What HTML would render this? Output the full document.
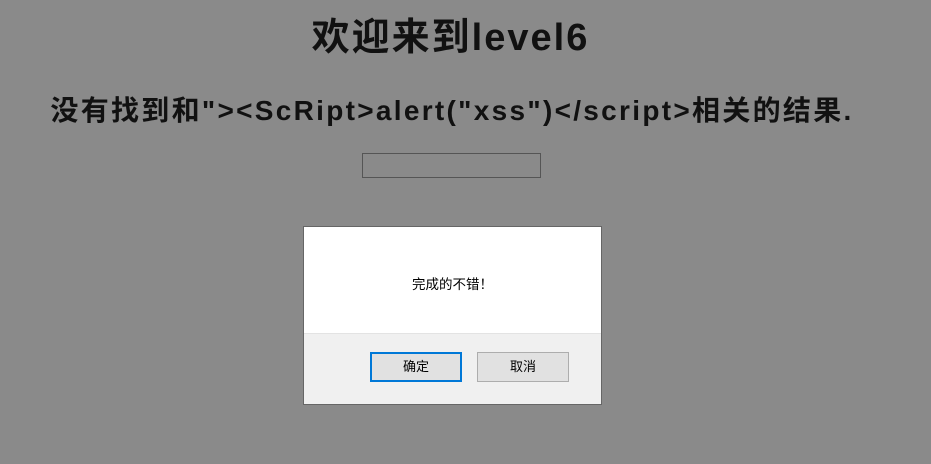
<!DOCTYPE html>
<html><head><meta charset="utf-8"><style>
html,body{margin:0;padding:0;}
body{width:931px;height:464px;background:#8a8a8a;position:relative;overflow:hidden;font-family:"Liberation Sans","Noto Sans CJK SC",sans-serif;color:#111;}
.t1{position:absolute;left:-15px;width:931px;top:13px;text-align:center;font-size:38px;font-weight:bold;line-height:50px;letter-spacing:2px;}
.t2{position:absolute;left:-1px;width:906px;top:91px;text-align:center;font-size:28px;font-weight:bold;line-height:40px;letter-spacing:2.3px;}
.inp{position:absolute;left:362px;top:153px;width:177px;height:23px;border:1px solid #555;}
.dlg{position:absolute;left:303px;top:226px;width:297px;height:177px;border:1px solid #666;background:#f0f0f0;}
.top{position:absolute;left:0;top:0;width:297px;height:106px;background:#fff;border-bottom:1px solid #e3e3e3;}
.msg{position:absolute;left:0;width:297px;top:46px;text-align:center;font-size:13.5px;color:#000;}
.b{position:absolute;top:125px;height:27px;width:89px;background:#e1e1e1;font-size:13px;text-align:center;line-height:27px;color:#000;box-sizing:border-box;}
.ok{left:66px;border:2px solid #0078d7;line-height:25px;width:92px;height:30px;}
.cn{left:173px;border:1px solid #adadad;width:92px;height:30px;line-height:28px;}
</style></head><body>
<div class="t1">欢迎来到level6</div>
<div class="t2">没有找到和"&gt;&lt;ScRipt&gt;alert("xss")&lt;/script&gt;相关的结果.</div>
<div class="inp"></div>
<div class="dlg"><div class="top"><div class="msg">完成的不错！</div></div>
<div class="b ok">确定</div><div class="b cn">取消</div></div>
</body></html>
